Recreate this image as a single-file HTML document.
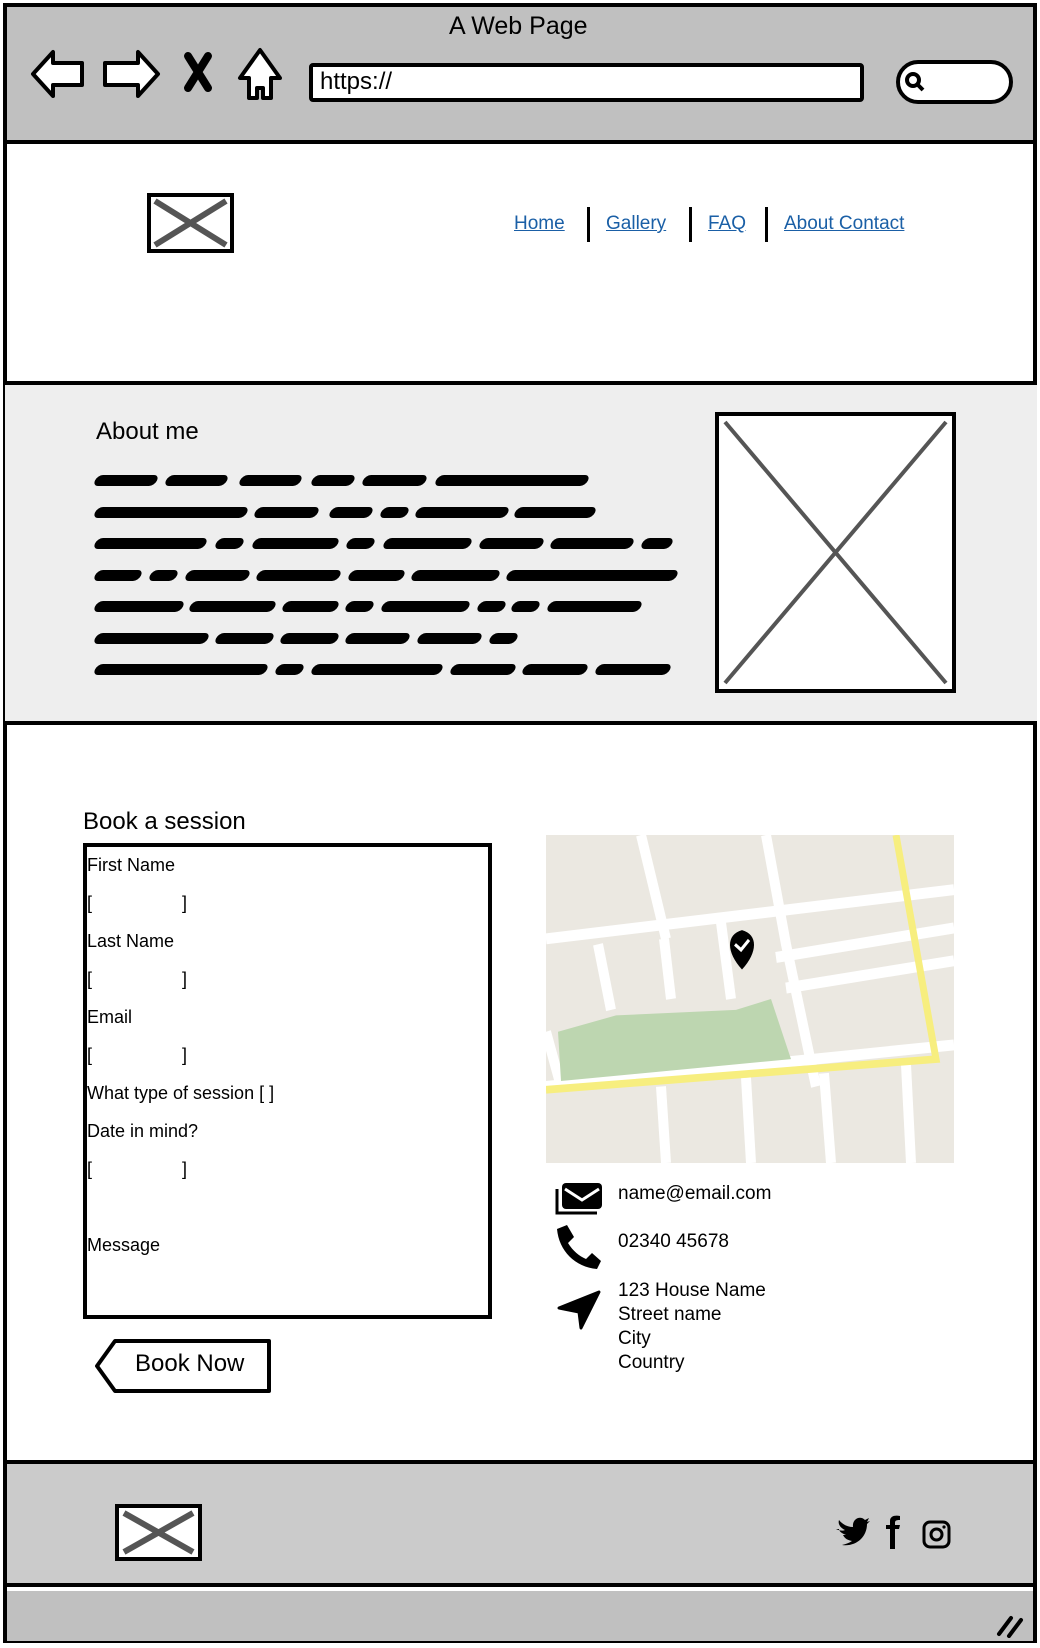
<!DOCTYPE html>
<html><head><meta charset="utf-8"><style>
*{margin:0;padding:0;box-sizing:border-box}
body{width:1040px;height:1648px;background:#fff;position:relative;overflow:hidden;font-family:"Liberation Sans",sans-serif;color:#000}
.a{position:absolute}
.t{position:absolute;white-space:nowrap}
.w{position:absolute;height:11px;background:#000;border-radius:6px;transform:skewX(-25deg)}
.nav a{color:#1a5fa6;text-decoration:underline;font-size:19px;position:absolute}
.f{position:absolute;left:87px;font-size:18px}
</style></head><body>
<div class="a" style="left:3px;top:3px;width:1034px;height:1640px;border:4px solid #000"></div>
<div class="a" style="left:7px;top:7px;width:1026px;height:137px;background:#c0c0c0;border-bottom:4px solid #000"></div>
<div class="t" style="left:449px;top:12px;font-size:25px">A Web Page</div>
<svg class="a" style="left:28px;top:44px" width="260" height="60" viewBox="0 0 260 60" fill="#fff" stroke="#000" stroke-width="4" stroke-linejoin="round">
<path d="M5 30 L25 8 L25 19 L54 19 L54 41 L25 41 L25 52 Z"/>
<path d="M133 30 L113 8 L113 19 L80 19 L80 41 L113 41 L113 52 Z" transform="translate(-3 0)"/>
<path d="M160 12 L180 44 M180 12 L160 44" stroke-width="8" stroke-linecap="round"/>
<path d="M232 6 L212 34 L221 34 L221 54 L229 54 L229 44 L235 44 L235 54 L243 54 L243 34 L252 34 Z"/>
</svg>
<div class="a" style="left:309px;top:63px;width:555px;height:39px;background:#fff;border:4px solid #000;border-radius:4px"></div>
<div class="t" style="left:320px;top:68px;font-size:24px">https://</div>
<div class="a" style="left:896px;top:60px;width:117px;height:44px;background:#fff;border:4px solid #000;border-radius:22px"></div>
<svg class="a" style="left:903px;top:70px" width="24" height="24"><circle cx="10" cy="10" r="6" fill="none" stroke="#000" stroke-width="4"/><path d="M14 14 L20 20" stroke="#000" stroke-width="4"/></svg>
<div class="a" style="left:147px;top:193px;width:87px;height:60px;border:4px solid #000;background:#fff"></div>
<svg class="a" style="left:151px;top:197px" width="79" height="52"><path d="M4 4 L75 48 M75 4 L4 48" stroke="#555" stroke-width="6"/></svg>
<div class="nav">
<a style="left:514px;top:213px">Home</a>
<a style="left:606px;top:213px">Gallery</a>
<a style="left:708px;top:213px">FAQ</a>
<a style="left:784px;top:213px">About Contact</a>
</div>
<div class="a" style="left:587px;top:207px;width:3px;height:35px;background:#000"></div>
<div class="a" style="left:689px;top:207px;width:3px;height:35px;background:#000"></div>
<div class="a" style="left:765px;top:207px;width:3px;height:35px;background:#000"></div>
<div class="a" style="left:5px;top:381px;width:1032px;height:344px;background:#eeeeee;border-top:4px solid #000;border-bottom:4px solid #000"></div>
<div class="t" style="left:96px;top:418px;font-size:24px">About me</div>
<div id="scr"></div>
<div class="a" style="left:715px;top:412px;width:241px;height:281px;border:4px solid #000;background:#fff"></div>
<svg class="a" style="left:719px;top:416px" width="233" height="273"><path d="M6 6 L227 267 M227 6 L6 267" stroke="#555" stroke-width="4"/></svg>
<div class="t" style="left:83px;top:808px;font-size:24px">Book a session</div>
<div class="a" style="left:83px;top:843px;width:409px;height:476px;border:4px solid #000"></div>
<div class="f" style="top:855px">First Name</div>
<div class="f" style="top:893px">[&nbsp;&nbsp;&nbsp;&nbsp;&nbsp;&nbsp;&nbsp;&nbsp;&nbsp;&nbsp;&nbsp;&nbsp;&nbsp;&nbsp;&nbsp;&nbsp;&nbsp;&nbsp;]</div>
<div class="f" style="top:931px">Last Name</div>
<div class="f" style="top:969px">[&nbsp;&nbsp;&nbsp;&nbsp;&nbsp;&nbsp;&nbsp;&nbsp;&nbsp;&nbsp;&nbsp;&nbsp;&nbsp;&nbsp;&nbsp;&nbsp;&nbsp;&nbsp;]</div>
<div class="f" style="top:1007px">Email</div>
<div class="f" style="top:1045px">[&nbsp;&nbsp;&nbsp;&nbsp;&nbsp;&nbsp;&nbsp;&nbsp;&nbsp;&nbsp;&nbsp;&nbsp;&nbsp;&nbsp;&nbsp;&nbsp;&nbsp;&nbsp;]</div>
<div class="f" style="top:1083px">What type of session [ ]</div>
<div class="f" style="top:1121px">Date in mind?</div>
<div class="f" style="top:1159px">[&nbsp;&nbsp;&nbsp;&nbsp;&nbsp;&nbsp;&nbsp;&nbsp;&nbsp;&nbsp;&nbsp;&nbsp;&nbsp;&nbsp;&nbsp;&nbsp;&nbsp;&nbsp;]</div>
<div class="f" style="top:1235px">Message</div>
<svg class="a" style="left:93px;top:1338px" width="182" height="56"><path d="M22 3 L176 3 L176 53 L22 53 L4 28 Z" fill="#fff" stroke="#000" stroke-width="4" stroke-linejoin="round"/></svg>
<div class="t" style="left:135px;top:1350px;font-size:24px">Book Now</div>
<svg class="a" style="left:546px;top:835px" width="408" height="328" viewBox="0 0 408 300" preserveAspectRatio="none">
<rect width="408" height="300" fill="#ebe8e1"/>
<g stroke="#fff" stroke-width="10" fill="none">
<path d="M0 95 L408 50"/><path d="M230 112 L408 85"/><path d="M240 140 L408 115"/><path d="M0 230 L408 192"/>
<path d="M95 0 L120 95"/><path d="M220 0 L240 100 L270 230"/><path d="M52 100 L65 160"/><path d="M118 95 L125 150"/><path d="M175 80 L185 150"/>
<path d="M0 180 L15 230"/><path d="M115 230 L120 300"/><path d="M200 222 L205 300"/><path d="M278 218 L285 300"/><path d="M360 210 L365 300"/>
</g>
<path d="M12 180 L70 165 L190 160 L225 150 L245 205 L15 225 Z" fill="#bdd6b0"/>
<path d="M0 233 L390 205 L350 0" stroke="#f7ee7f" stroke-width="7" fill="none"/>
<path d="M196 128 C180 112 180 96 196 92 C212 96 212 112 196 128Z" fill="#000" transform="translate(0 -5)"/>
<path d="M189 100 L195 105 L203 96" stroke="#fff" stroke-width="3" fill="none"/>
</svg>
<svg class="a" style="left:553px;top:1181px" width="52" height="36"><path d="M4 8 L4 32 L44 32" stroke="#000" stroke-width="3" fill="none"/><rect x="9" y="2" width="40" height="26" rx="4" fill="#000"/><path d="M12 8 L29 19 L46 8" stroke="#fff" stroke-width="3" fill="none"/></svg>
<div class="t" style="left:618px;top:1183px;font-size:19px">name@email.com</div>
<div class="t" style="left:618px;top:1231px;font-size:19px">02340 45678</div>
<svg class="a" style="left:553px;top:1223px" width="50" height="46"><path d="M4 6 L14 2 L21 14 L15 20 C20 28 26 33 33 36 L39 30 L48 38 L44 46 C22 44 6 28 4 6Z" fill="#000"/></svg>
<svg class="a" style="left:557px;top:1290px" width="44" height="40"><path d="M2 18 L42 2 L24 38 L22 22 Z" fill="#000" stroke="#000" stroke-width="3" stroke-linejoin="round"/></svg>
<div class="t" style="left:618px;top:1279px;font-size:19px;line-height:24px">123 House Name<br>Street name<br>City<br>Country</div>
<div class="a" style="left:7px;top:1460px;width:1026px;height:127px;background:#cbcbcb;border-top:4px solid #000;border-bottom:4px solid #000"></div>
<div class="a" style="left:115px;top:1504px;width:87px;height:57px;border:4px solid #000;background:#fff"></div>
<svg class="a" style="left:119px;top:1508px" width="79" height="49"><path d="M5 5 L74 44 M74 5 L5 44" stroke="#555" stroke-width="6"/></svg>
<svg class="a" style="left:834px;top:1515px" width="120" height="36">
<path d="M2 14 C6 16 9 16 11 15 C5 12 4 8 5 5 C9 10 14 12 19 12 C18 4 26 0 31 5 L35 3 L33 7 L36 6 L33 9 C33 22 22 32 8 30 C12 29 15 28 18 26 C12 25 10 22 9 20 L12 20 C7 18 5 16 5 14Z" fill="#000"/>
<path d="M56 34 L56 14 L52 14 L52 10 L56 10 L56 6 C56 1 61 0 66 1 L66 5 C61 5 61 6 61 9 L61 10 L66 10 L65 14 L61 14 L61 34Z" fill="#000"/>
<rect x="90" y="7" width="25" height="25" rx="6" fill="none" stroke="#000" stroke-width="3"/><circle cx="102.5" cy="19.5" r="5.5" fill="none" stroke="#000" stroke-width="3"/><circle cx="110" cy="12" r="1.6" fill="#000"/>
</svg>
<div class="a" style="left:7px;top:1591px;width:1026px;height:50px;background:#c0c0c0"></div>
<svg class="a" style="left:995px;top:1612px" width="30" height="26"><path d="M4 22 L16 6 M14 24 L26 8" stroke="#000" stroke-width="4" stroke-linecap="round"/></svg>
<script>
var L=[[[95,62],[166,61],[240,61],[312,42],[363,63],[436,152]],
[[95,152],[255,63],[330,42],[381,27],[416,92],[515,80]],
[[95,111],[216,27],[253,85],[347,27],[384,87],[480,63],[551,82],[642,30]],
[[95,46],[150,27],[186,63],[257,83],[349,55],[412,87],[507,170]],
[[95,88],[190,85],[283,55],[346,27],[382,87],[478,27],[512,27],[548,93]],
[[95,113],[216,57],[281,57],[346,63],[418,63],[490,27]],
[[95,172],[276,27],[312,130],[451,64],[523,64],[596,74]]];
var h='';L.forEach(function(r,i){r.forEach(function(w){h+='<div class="w" style="left:'+w[0]+'px;top:'+(475+i*31.5)+'px;width:'+w[1]+'px"></div>'})});
document.getElementById('scr').innerHTML=h;
</script>
</body></html>
